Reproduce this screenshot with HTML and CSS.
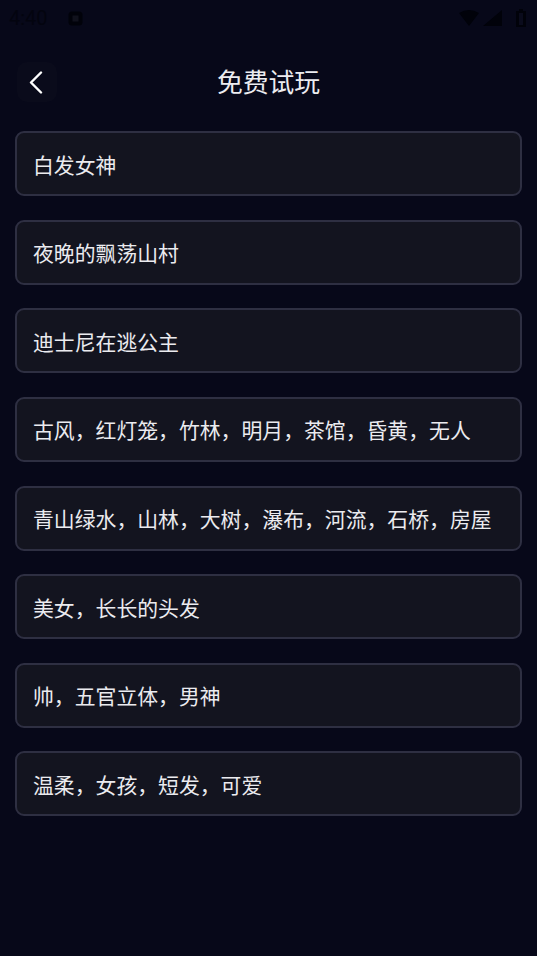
FILE: index.html
```html
<!DOCTYPE html>
<html lang="zh-CN">
<head>
<meta charset="utf-8">
<title>免费试玩</title>
<link rel="stylesheet" href="styles.css">
</head>
<body>
<div class="status">
  <div class="status-left">
    <span class="time">4:40</span>
    <svg class="notif" width="15" height="15" viewBox="0 0 15 15"><rect x="0.5" y="0.5" width="14" height="14" rx="3.5" fill="#01020a"/><rect x="4.5" y="4.5" width="6" height="6" fill="#10111c"/></svg>
  </div>
  <div class="status-right">
    <svg class="wifi" width="20" height="16" viewBox="0 0 20 16"><path d="M0 3 Q10 -3 20 3 L10 16Z" fill="#01020a"/></svg>
    <svg class="signal" width="19" height="16" viewBox="0 0 19 16"><path d="M19 0V16H0Z" fill="#01020a"/></svg>
    <svg class="battery" width="10" height="18" viewBox="0 0 10 18"><path d="M3 0H7V2H10V18H0V2H3Z" fill="#01020a"/><rect x="3" y="4" width="4" height="12" fill="#0a0b1c"/></svg>
  </div>
</div>
<header class="nav">
  <button class="back" aria-label="返回">
    <svg width="14" height="23" viewBox="0 0 14 23"><path d="M12 1.5 L2 11.5 L12 21.5" fill="none" stroke="#fff" stroke-width="2.4" stroke-linecap="round" stroke-linejoin="round"/></svg>
  </button>
  <h1 class="title">免费试玩</h1>
</header>
<main class="list">
  <div class="item">白发女神</div>
  <div class="item">夜晚的飘荡山村</div>
  <div class="item">迪士尼在逃公主</div>
  <div class="item">古风，红灯笼，竹林，明月，茶馆，昏黄，无人</div>
  <div class="item">青山绿水，山林，大树，瀑布，河流，石桥，房屋</div>
  <div class="item">美女，长长的头发</div>
  <div class="item">帅，五官立体，男神</div>
  <div class="item">温柔，女孩，短发，可爱</div>
</main>
</body>
</html>
```

FILE: styles.css
```css
* { box-sizing: border-box; }
html, body { margin: 0; height: 100%; }
body {
  width: 537px;
  height: 956px;
  overflow: hidden;
  background: #070819;
  font-family: "Roboto", "Noto Sans CJK SC", sans-serif;
  color: #fff;
}
.status {
  height: 36px;
  display: flex;
  align-items: center;
  justify-content: space-between;
  padding: 0 11px 0 9px;
}
.status-left, .status-right { display: flex; align-items: center; }
.status-left { gap: 20px; }
.status-right { gap: 4px; }
.signal { margin-right: 10px; }
.time { font-size: 20px; color: #03040f; }
.nav {
  height: 92px;
  display: flex;
  align-items: center;
  justify-content: center;
  position: relative;
  padding-bottom: 4px;
}
.back {
  position: absolute;
  left: 17px;
  top: 26px;
  width: 40px;
  height: 40px;
  display: flex;
  align-items: center;
  justify-content: center;
  padding: 0 2px 0 0;
  border: 0;
  border-radius: 10px;
  background: #0a0b1b;
}
.title {
  margin: 0;
  font-size: 25.8px;
  font-weight: 400;
  color: #ececf0;
}
.list {
  padding: 3.2px 15px 0;
  display: flex;
  flex-direction: column;
  gap: 23.6px;
}
.item {
  height: 65px;
  padding: 0 16px;
  display: flex;
  align-items: center;
  border: 2px solid #2e2f42;
  border-radius: 9px;
  background: #13141f;
  font-size: 20.85px;
  color: #ebebef;
  white-space: nowrap;
}
```
